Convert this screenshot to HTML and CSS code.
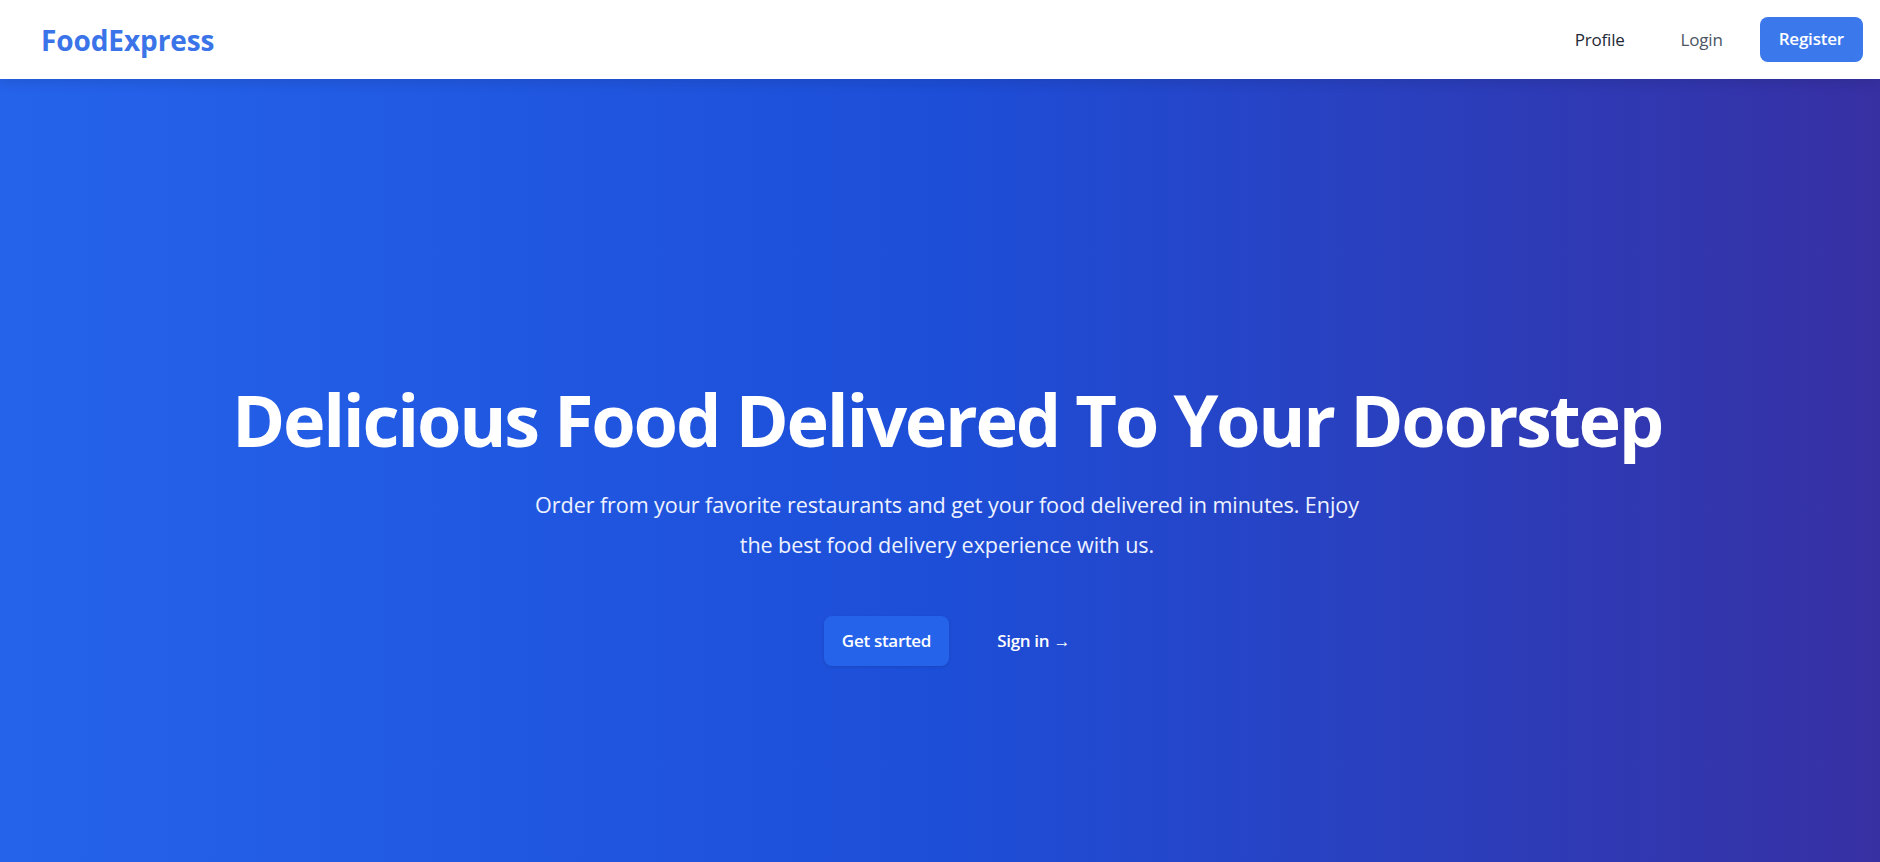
FILE: index.html
```html
<!DOCTYPE html>
<html lang="en">
<head>
<meta charset="utf-8">
<title>FoodExpress</title>
<link rel="stylesheet" href="styles.css">
</head>
<body>
  <header class="navbar">
    <a class="brand" href="#">FoodExpress</a>
    <nav class="nav-links">
      <a class="nav-link nav-link--profile" href="#">Profile</a>
      <a class="nav-link nav-link--login" href="#">Login</a>
      <a class="nav-button" href="#">Register</a>
    </nav>
  </header>
  <main class="hero">
    <div class="hero-content">
      <h1 class="hero-title">Delicious Food Delivered To Your Doorstep</h1>
      <p class="hero-text">Order from your favorite restaurants and get your food delivered in minutes. Enjoy the best food delivery experience with us.</p>
      <div class="hero-actions">
        <a class="btn-primary" href="#">Get started</a>
        <a class="btn-link" href="#">Sign in <span aria-hidden="true">&rarr;</span></a>
      </div>
    </div>
  </main>
</body>
</html>
```

FILE: styles.css
```css
html {
  scrollbar-width: none;
}

body {
  margin: 0;
  font-family: "Open Sans", "Noto Sans", "Liberation Sans", sans-serif;
  background: #ffffff;
}

a {
  text-decoration: none;
}

.navbar {
  position: relative;
  z-index: 2;
  height: 79px;
  box-sizing: border-box;
  display: flex;
  align-items: center;
  justify-content: space-between;
  padding: 0 17px 0 41px;
  background: #ffffff;
  box-shadow: 0 4px 10px rgba(15, 23, 42, 0.12);
}

.brand {
  font-size: 28px;
  font-weight: 700;
  color: #3a74e8;
  letter-spacing: -0.1px;
  line-height: 1;
}

.nav-links {
  display: flex;
  align-items: center;
  gap: 18px;
}

.nav-link {
  padding: 0 19px;
  font-size: 17px;
  font-weight: 500;
  letter-spacing: -0.2px;
  line-height: 24px;
}

.nav-link--profile {
  color: #1f2937;
}

.nav-link--login {
  color: #4b5563;
}

.nav-button {
  display: block;
  padding: 10px 19px 11px;
  border-radius: 8px;
  background: #3b78ec;
  color: #ffffff;
  font-size: 17px;
  font-weight: 600;
  letter-spacing: -0.2px;
  line-height: 24px;
}

.hero {
  min-height: 100vh;
  box-sizing: border-box;
  display: flex;
  align-items: center;
  justify-content: center;
  padding: 29px 0 0 14px;
  background: linear-gradient(to right, #2563eb 0%, #1d4ed8 50%, #3730a3 100%);
}

.hero-content {
  display: flex;
  flex-direction: column;
  align-items: center;
  text-align: center;
}

.hero-title {
  margin: 0;
  font-size: 72px;
  font-weight: 700;
  line-height: 1;
  letter-spacing: -2.3px;
  color: #ffffff;
}

.hero-text {
  margin: 30px 0 0;
  max-width: 842px;
  font-size: 21.6px;
  line-height: 40px;
  letter-spacing: -0.1px;
  color: #eef2ff;
}

.hero-actions {
  margin-top: 51px;
  display: flex;
  align-items: center;
  gap: 48px;
}

.btn-primary {
  display: block;
  padding: 12px 18px;
  border-radius: 8px;
  background: #2563eb;
  box-shadow: 0 1px 3px rgba(15, 23, 42, 0.15);
  color: #ffffff;
  font-size: 17px;
  font-weight: 600;
  letter-spacing: -0.3px;
  line-height: 26px;
}

.btn-link {
  color: #ffffff;
  font-size: 17px;
  font-weight: 600;
  letter-spacing: -0.3px;
  line-height: 26px;
}
```
